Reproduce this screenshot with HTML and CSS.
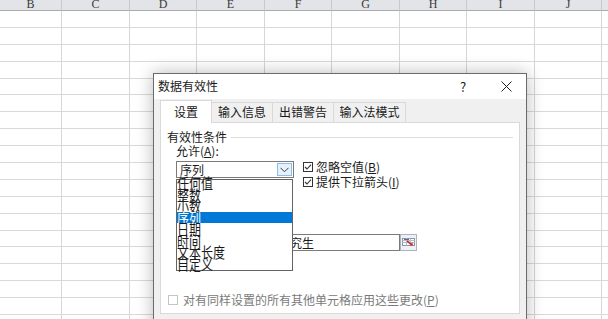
FILE: index.html
```html
<!DOCTYPE html>
<html lang="zh-CN">

<head>
    <meta charset="UTF-8">
    <meta name="viewport" content="width=device-width, initial-scale=1.0">
    <title>数据有效性</title>
    <link rel="stylesheet" href="styles.css">
</head>

<body>
    <div class="sheet">
        <div class="row head">
            <div class="cell">B</div>
            <div class="cell">C</div>
            <div class="cell">D</div>
            <div class="cell">E</div>
            <div class="cell">F</div>
            <div class="cell">G</div>
            <div class="cell">H</div>
            <div class="cell">I</div>
            <div class="cell">J</div>
            <div class="cell">K</div>
        </div>
        <div id="rows"></div>

        <div class="dialog">
            <div class="titlebar">
                <div class="title">数据有效性</div>
                <div class="tb-btn help">?</div>
                <div class="tb-btn close">
                    <svg width="11" height="11" viewBox="0 0 11 11">
                        <path d="M0.5 0.5 L10.5 10.5 M10.5 0.5 L0.5 10.5" stroke="#222" stroke-width="1" fill="none" />
                    </svg>
                </div>
            </div>
            <div class="dlg-body">
                <div class="tabs">
                    <div class="tab active">设置</div>
                    <div class="tab t-wide">输入信息</div>
                    <div class="tab t-wide">出错警告</div>
                    <div class="tab t-ime">输入法模式</div>
                </div>
                <div class="panel">
                    <div class="group-title">有效性条件</div>
                    <div class="group">
                        <div class="label">允许(<u>A</u>):</div>
                        <div class="settings">
                            <div class="combo-wrap">
                                <div class="combo">
                                    <span>序列</span>
                                    <div class="combo-btn">
                                        <svg width="9" height="6" viewBox="0 0 9 6">
                                            <path d="M0.5 0.8 L4.5 4.8 L8.5 0.8" stroke="#3c3c3c" stroke-width="1" fill="none" />
                                        </svg>
                                    </div>
                                </div>
                                <ul class="list">
                                    <li><span>任何值</span></li>
                                    <li><span>整数</span></li>
                                    <li><span>小数</span></li>
                                    <li class="sel"><span>序列</span></li>
                                    <li><span>日期</span></li>
                                    <li><span>时间</span></li>
                                    <li><span>文本长度</span></li>
                                    <li><span>自定义</span></li>
                                </ul>
                            </div>
                            <div class="checks">
                                <div class="check">
                                    <svg class="box" width="10" height="10" viewBox="0 0 10 10">
                                        <rect x="0.5" y="0.5" width="9" height="9" fill="#fff" stroke="#333" />
                                        <path d="M2 5 L4 7 L8 2.6" stroke="#333" stroke-width="1.1" fill="none" />
                                    </svg>
                                    <span>忽略空值(<u>B</u>)</span>
                                </div>
                                <div class="check">
                                    <svg class="box" width="10" height="10" viewBox="0 0 10 10">
                                        <rect x="0.5" y="0.5" width="9" height="9" fill="#fff" stroke="#333" />
                                        <path d="M2 5 L4 7 L8 2.6" stroke="#333" stroke-width="1.1" fill="none" />
                                    </svg>
                                    <span>提供下拉箭头(<u>I</u>)</span>
                                </div>
                            </div>
                        </div>
                        <div class="label source-label">来源(<u>S</u>):</div>
                        <div class="source">
                            <div class="source-input">专科，本科，硕士研究生</div>
                            <div class="range-btn">
                                <svg width="17" height="17" viewBox="0 0 17 17">
                                    <rect x="0.5" y="0.5" width="16" height="16" fill="#eef0f3" stroke="#a9b3c2" />
                                    <rect x="2.5" y="4.5" width="12" height="7" fill="#fff" stroke="#8a96a8" />
                                    <path d="M2.5 6.5 H14.5 M2.5 8.5 H14.5 M6.5 4.5 V11.5 M10.5 4.5 V11.5" stroke="#b5bfcc" stroke-width="1" />
                                    <path d="M4 5.5 H9" stroke="#4d6f9e" stroke-width="1" />
                                    <path d="M7 7 L11.5 10.5" stroke="#d2302a" stroke-width="1.6" />
                                    <path d="M9.5 11.5 L13 11.5 L12.5 8.2 Z" fill="#d2302a" />
                                </svg>
                            </div>
                        </div>
                    </div>
                    <div class="check disabled">
                        <span class="box-off"></span>
                        <span>对有同样设置的所有其他单元格应用这些更改(<u>P</u>)</span>
                    </div>
                </div>
            </div>
        </div>
    </div>

    <script>
        let rows = document.getElementById('rows');
        for (let i = 0; i < 19; i++) {
            let row = document.createElement('div');
            row.className = 'row';
            for (let j = 0; j < 10; j++) {
                let cell = document.createElement('div');
                cell.className = 'cell';
                row.appendChild(cell);
            }
            rows.appendChild(row);
        }
    </script>
</body>

</html>
```

FILE: styles.css
```css
body {
    margin: 0;
    font-family: "Noto Sans CJK SC", "Noto Sans", sans-serif;
    font-size: 12px;
    color: #1a1a1a;
}

u {
    text-decoration: underline;
    text-underline-offset: 1px;
}

/* spreadsheet behind the dialog */
.sheet {
    position: relative;
    width: 608px;
    height: 319px;
    overflow: hidden;
    background: #fff;
}

.row {
    display: flex;
    height: 16.9px;
}

.cell {
    flex: none;
    box-sizing: border-box;
    width: 67px;
    height: 100%;
    border-right: 1px solid #d6d6d6;
    border-bottom: 1px solid #d9d9d9;
}

.cell:nth-child(even) {
    width: 68px;
}

.cell:first-child {
    width: 62px;
}

.row.head {
    height: 11px;
    background: #e2e4e7;
}

.head .cell {
    border-right-color: #c6c8cc;
    border-bottom-color: #a8abb0;
    font-family: "Liberation Serif", serif;
    font-size: 12px;
    line-height: 8px;
    text-align: center;
    color: #3a3a3a;
    overflow: hidden;
}

/* dialog */
.dialog {
    position: absolute;
    left: 153px;
    top: 73px;
    width: 374px;
    height: 262px;
    box-sizing: border-box;
    border: 1px solid #6b6b6b;
    background: #f0f0f0;
    box-shadow: 0 0 16px rgba(0, 0, 0, 0.28);
}

.titlebar {
    display: flex;
    align-items: center;
    height: 25px;
    padding-left: 4px;
    background: #fff;
}

.title {
    flex: 1;
    margin-top: -2px;
}

.tb-btn {
    width: 40px;
    height: 25px;
    display: flex;
    align-items: center;
    justify-content: center;
}

.help {
    margin-right: 3px;
    font-size: 13px;
}

.dlg-body {
    padding: 0 6px;
}

.tabs {
    display: flex;
    align-items: flex-end;
    height: 23px;
}

.tab {
    position: relative;
    box-sizing: border-box;
    height: 20px;
    line-height: 18px;
    border: 1px solid #d9d9d9;
    border-bottom: none;
    margin-left: -1px;
    text-align: center;
    background: #f0f0f0;
}

.tab.active {
    z-index: 2;
    width: 52px;
    height: 23px;
    margin-left: 0;
    margin-bottom: -1px;
    line-height: 22px;
    background: #fff;
}

.t-wide {
    width: 62px;
}

.t-ime {
    width: 73px;
}

.panel {
    position: relative;
    box-sizing: border-box;
    height: 192px;
    padding: 7px 0 0 6px;
    border: 1px solid #d9d9d9;
    background: #fff;
}

.group-title {
    display: flex;
    align-items: center;
    height: 14px;
    line-height: 14px;
}

.group-title::after {
    content: "";
    flex: 1;
    margin: 0 6px 0 4px;
    border-top: 1px solid #dcdcdc;
}

.group {
    padding-left: 9px;
}

.label {
    height: 14px;
    line-height: 14px;
}

.settings {
    display: flex;
    align-items: flex-start;
    height: 28px;
    margin-top: 3px;
}

.combo-wrap {
    position: relative;
    width: 118px;
    height: 17px;
}

.combo {
    display: flex;
    align-items: center;
    box-sizing: border-box;
    height: 17px;
    padding-left: 3px;
    border: 1px solid #7a7a7a;
    background: #fff;
}

.combo-btn {
    display: flex;
    align-items: center;
    justify-content: center;
    box-sizing: border-box;
    width: 15px;
    height: 13px;
    margin-left: auto;
    margin-right: 1px;
    border: 1px solid #8cbbe8;
    background: #e5f1fb;
}

.list {
    position: absolute;
    left: 0;
    top: 18px;
    z-index: 3;
    box-sizing: border-box;
    width: 117px;
    height: 92px;
    margin: 0;
    padding: 0;
    list-style: none;
    border: 1px solid #646464;
    background: #fff;
}

.list li {
    height: 11.5px;
    line-height: 11.5px;
    white-space: nowrap;
}

.list li:first-child {
    margin-top: -3px;
}

.list li span {
    display: inline-block;
    transform: scaleY(1.2);
}

.list li.sel {
    background: #0078d7;
    color: #fff;
}

.checks {
    margin-left: 9px;
    margin-top: -2px;
}

.check {
    display: flex;
    align-items: center;
    gap: 3px;
    height: 15px;
    white-space: nowrap;
}

.source-label {
    margin-top: 30px;
}

.source {
    display: flex;
    margin-top: 1px;
}

.source-input {
    box-sizing: border-box;
    width: 224px;
    height: 17px;
    padding-left: 5px;
    line-height: 15px;
    border: 1px solid #7a7a7a;
    overflow: hidden;
    white-space: nowrap;
}

.range-btn {
    width: 17px;
    height: 17px;
}

.check.disabled {
    margin-top: 41px;
    margin-left: 1px;
    gap: 5px;
    color: #7a7a7a;
}

.box-off {
    box-sizing: border-box;
    width: 10px;
    height: 10px;
    border: 1px solid #c4c4c4;
    background: #fff;
}
```
